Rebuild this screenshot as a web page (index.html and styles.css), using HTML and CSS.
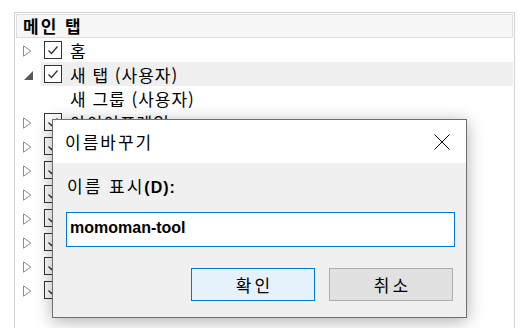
FILE: index.html
```html
<!DOCTYPE html>
<html lang="ko">
  <head>
    <meta charset="UTF-8" />
    <meta name="viewport" content="width=device-width, initial-scale=1.0" />
    <title>이름바꾸기</title>
    <link rel="stylesheet" href="styles.css">
  </head>
  <body>
    <div class="panel">
      <div class="panel-head">메인 탭</div>

      <ul class="tree">
        <li class="row"><span class="twisty"></span><span class="check"></span><span class="label">홈</span></li>
        <li class="row row-selected"><span class="twisty open"></span><span class="check"></span><span class="label">새 탭 (사용자)</span></li>
        <li class="row"><span class="twisty none"></span><span class="check none"></span><span class="label">새 그룹 (사용자)</span></li>
        <li class="row"><span class="twisty"></span><span class="check"></span><span class="label">아이이프레임</span></li>
        <li class="row"><span class="twisty"></span><span class="check"></span></li>
        <li class="row"><span class="twisty"></span><span class="check"></span></li>
        <li class="row"><span class="twisty"></span><span class="check"></span></li>
        <li class="row"><span class="twisty"></span><span class="check"></span></li>
        <li class="row"><span class="twisty"></span><span class="check"></span></li>
        <li class="row"><span class="twisty"></span><span class="check"></span></li>
        <li class="row"><span class="twisty"></span><span class="check"></span></li>
      </ul>

      <!-- rename dialog floats over the list -->
      <div class="dialog">
        <div class="dialog-title">
          <span>이름바꾸기</span>
          <svg class="close" width="16" height="16" viewBox="0 0 16 16">
            <path d="M0.5 0.5 L15.5 15.5 M15.5 0.5 L0.5 15.5" stroke="#000" stroke-width="1" fill="none" />
          </svg>
        </div>
        <div class="dialog-body">
          <div class="field-label">이름 표시<b>(D):</b></div>
          <div class="field-input">momoman-tool</div>
          <div class="buttons">
            <button class="btn btn-default">확인</button>
            <button class="btn">취소</button>
          </div>
        </div>
      </div>
    </div>
  </body>
</html>
```

FILE: styles.css
```css
body {
  margin: 0;
  background: #fff;
  font-family: "Noto Sans CJK KR", "Liberation Sans", sans-serif;
  color: #000;
}
.panel {
  position: relative;
  box-sizing: border-box;
  width: 501px;
  height: 330px;
  margin: 12px 0 0 14px;
  padding: 1px;
  border: 1px solid #d4d4d4;
  border-bottom: none;
}
.panel-head {
  box-sizing: border-box;
  height: 24px;
  padding-left: 6px;
  border: 1px solid #dedede;
  background: #f7f7f7;
  font-size: 17px;
  font-weight: bold;
  line-height: 21px;
  letter-spacing: 2px;
}
.tree {
  list-style: none;
  margin: 0;
  padding: 0;
}
.row {
  display: flex;
  align-items: center;
  height: 24px;
  font-size: 17px;
}
.row-selected .check,
.row-selected .label {
  background: #efefef;
}
.row-selected .label {
  flex: 1;
}
.twisty {
  width: 23px;
  height: 24px;
  margin-left: 2px;
  background: url("data:image/svg+xml,%3Csvg xmlns='http://www.w3.org/2000/svg' width='10' height='12'%3E%3Cpath d='M1.5 0.8 L8.8 6 L1.5 11.2 Z' stroke='%238c8c8c' stroke-width='1' fill='none'/%3E%3C/svg%3E") no-repeat 4px 7px;
}
.twisty.open {
  background: url("data:image/svg+xml,%3Csvg xmlns='http://www.w3.org/2000/svg' width='9' height='9'%3E%3Cpath d='M9 0 L9 9 L0 9 Z' fill='%23595959'/%3E%3C/svg%3E") no-repeat 6px 9px;
}
.twisty.none {
  background: none;
}
.check {
  display: flex;
  align-items: center;
  width: 29px;
  height: 24px;
  padding-left: 3px;
  box-sizing: border-box;
}
.check::before {
  content: "";
  box-sizing: border-box;
  width: 18px;
  height: 18px;
  border: 1px solid #333;
  background: #fff url("data:image/svg+xml,%3Csvg xmlns='http://www.w3.org/2000/svg' width='16' height='16'%3E%3Cpath d='M3.5 8.5 L6.5 11.5 L12.5 4.5' stroke='%23333' stroke-width='1.3' fill='none'/%3E%3C/svg%3E") no-repeat center;
}
.check.none::before {
  display: none;
}
.label {
  display: flex;
  align-items: center;
  height: 24px;
  letter-spacing: 1px;
}
.dialog {
  position: absolute;
  left: 37px;
  top: 106px;
  width: 415px;
  box-sizing: border-box;
  border: 1px solid #6f6f6f;
  background: #f0f0f0;
  box-shadow: 0 3px 16px rgba(0, 0, 0, 0.32);
}
.dialog-title {
  display: flex;
  align-items: center;
  justify-content: space-between;
  height: 43px;
  padding: 0 16px 0 12px;
  background: #fff;
  font-size: 17px;
  letter-spacing: 2px;
}
.close {
  margin-top: 1px;
}
.dialog-body {
  padding: 13px 11px 16px 13px;
}
.field-label {
  height: 20px;
  font-size: 17px;
  line-height: 20px;
  padding-left: 1px;
  letter-spacing: 2px;
}
.field-label b {
  font-family: "Liberation Sans", sans-serif;
  font-size: 16px;
  letter-spacing: 1px;
}
.field-input {
  box-sizing: border-box;
  height: 35px;
  margin-top: 16px;
  padding: 5px 3px;
  border: 1px solid #0078d7;
  background: #fff;
  font-family: "Liberation Sans", sans-serif;
  font-size: 16px;
  font-weight: bold;
  line-height: 20px;
}
.buttons {
  display: flex;
  justify-content: flex-end;
  gap: 14px;
  margin-top: 21px;
  padding-right: 2px;
}
.btn {
  box-sizing: border-box;
  width: 124px;
  height: 33px;
  padding: 0 0 0 3px;
  border: 1px solid #adadad;
  background: #e1e1e1;
  font-family: "Noto Sans CJK KR", sans-serif;
  font-size: 17px;
  color: #000;
  letter-spacing: 3px;
}
.btn-default {
  border-color: #0078d7;
  background: #e5f1fb;
}
```
